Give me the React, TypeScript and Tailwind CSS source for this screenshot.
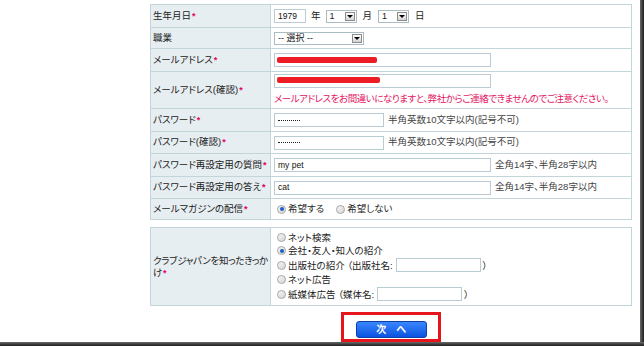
import React from "react";

const font =
  "font-['Liberation_Sans','Noto_Sans_CJK_JP',sans-serif] [font-feature-settings:'palt']";

const Req = () => (
  <span className="ml-[1px] text-[9px] font-bold text-[#e8005c]">*</span>
);

function Box({ w, children }: { w: string; children?: React.ReactNode }) {
  return (
    <div
      className={`${w} flex h-[14px] shrink-0 items-center border border-[#b9ccd3] bg-white px-[3px] text-[8.5px] leading-none text-[#111]`}
    >
      {children}
    </div>
  );
}

function Select({ w, label }: { w: string; label: string }) {
  return (
    <div
      className={`${w} flex h-[13px] shrink-0 items-center justify-between border border-[#a9bcc4] bg-white pl-[3px] pr-[1px] text-[9px] leading-none`}
    >
      <span>{label}</span>
      <span className="flex h-[9px] w-[10px] items-center justify-center border border-[#8c8c8c] bg-gradient-to-b from-white to-[#d4d4d4]">
        <span className="h-0 w-0 border-t-[3px] border-r-[3px] border-l-[3px] border-t-black border-r-transparent border-l-transparent" />
      </span>
    </div>
  );
}

function Radio({ on }: { on?: boolean }) {
  return (
    <span className="mr-[2px] flex h-[9px] w-[9px] shrink-0 items-center justify-center rounded-full border border-[#a9a9a9] bg-gradient-to-br from-[#f6f6f6] to-[#d6d6d6]">
      {on && <span className="h-[4px] w-[4px] rounded-full bg-[#1d5fc8]" />}
    </span>
  );
}

function Row({
  label,
  h,
  children,
}: {
  label: React.ReactNode;
  h: string;
  children: React.ReactNode;
}) {
  return (
    <tr className={h}>
      <td className="w-[120px] border border-[#c2d5db] bg-[#e7eef1] pl-[2px] align-middle whitespace-nowrap">
        {label}
      </td>
      <td className="border border-[#c2d5db] bg-white pl-[3px] align-middle">
        {children}
      </td>
    </tr>
  );
}

const Pw = () => (
  <span className="h-0 w-[22px] border-t border-dotted border-[#222]" />
);

export default function App() {
  return (
    <div className={`${font} flex h-[346px] w-[644px] flex-col text-[9.5px] text-[#222]`}>
      <div className="flex h-[342px]">
        <div className="w-[640px] bg-white pt-[4px] pl-[150px]">
          <table className="w-[482px] border-collapse">
            <tbody>
              <Row h="h-[23px]" label={<>生年月日<Req /></>}>
                <div className="flex items-center">
                  <Box w="w-[32px]">1979</Box>
                  <span className="mx-[5px]">年</span>
                  <Select w="w-[31px]" label="1" />
                  <span className="mx-[6px]">月</span>
                  <Select w="w-[31px]" label="1" />
                  <span className="ml-[6px]">日</span>
                </div>
              </Row>
              <Row h="h-[21px]" label="職業">
                <Select w="w-[90px]" label="-- 選択 --" />
              </Row>
              <Row h="h-[23px]" label={<>メールアドレス<Req /></>}>
                <div className="relative">
                  <Box w="w-[217px]" />
                  <span className="absolute top-[4px] left-[3px] h-[6px] w-[100px] rounded-[2px] bg-[#ee1c25]" />
                </div>
              </Row>
              <Row h="h-[37px]" label={<>メールアドレス(確認)<Req /></>}>
                <div className="relative pt-[1px]">
                  <Box w="w-[217px]" />
                  <span className="absolute top-[4px] left-[3px] h-[6px] w-[103px] rounded-[2px] bg-[#ee1c25]" />
                </div>
                <div className="mt-[4px] tracking-[-0.45px] text-[#e4145f]">
                  メールアドレスをお間違いになりますと、弊社からご連絡できませんのでご注意ください。
                </div>
              </Row>
              <Row h="h-[23px]" label={<>パスワード<Req /></>}>
                <div className="flex items-center">
                  <Box w="w-[110px]">
                    <Pw />
                  </Box>
                  <span className="ml-[4px] text-[#444]">半角英数10文字以内(記号不可)</span>
                </div>
              </Row>
              <Row h="h-[22px]" label={<>パスワード(確認)<Req /></>}>
                <div className="flex items-center">
                  <Box w="w-[110px]">
                    <Pw />
                  </Box>
                  <span className="ml-[4px] text-[#444]">半角英数10文字以内(記号不可)</span>
                </div>
              </Row>
              <Row h="h-[23px]" label={<>パスワード再設定用の質問<Req /></>}>
                <div className="flex items-center">
                  <Box w="w-[217px]">my pet</Box>
                  <span className="ml-[4px] text-[#444]">全角14字、半角28字以内</span>
                </div>
              </Row>
              <Row h="h-[22px]" label={<>パスワード再設定用の答え<Req /></>}>
                <div className="flex items-center">
                  <Box w="w-[217px]">cat</Box>
                  <span className="ml-[4px] text-[#444]">全角14字、半角28字以内</span>
                </div>
              </Row>
              <Row h="h-[21px]" label={<>メールマガジンの配信<Req /></>}>
                <div className="flex items-center pl-[3px]">
                  <Radio on />
                  <span>希望する</span>
                  <span className="ml-[12px] flex items-center">
                    <Radio />
                    <span>希望しない</span>
                  </span>
                </div>
              </Row>
            </tbody>
          </table>

          <table className="mt-[7px] w-[482px] border-collapse">
            <tbody>
              <Row
                h="h-[78px]"
                label={
                  <div className="leading-[12px] tracking-[-0.3px]">
                    クラブジャパンを知ったきっか
                    <br />け<Req />
                  </div>
                }
              >
                <div className="flex flex-col pl-[3px] leading-[13px]">
                  <div className="flex items-center">
                    <Radio />
                    ネット検索
                  </div>
                  <div className="flex items-center">
                    <Radio on />
                    会社・友人・知人の紹介
                  </div>
                  <div className="flex h-[16px] items-center">
                    <Radio />
                    出版社の紹介 （出版社名:
                    <span className="ml-[3px]">
                      <Box w="w-[85px]" />
                    </span>
                    <span className="ml-[2px]">）</span>
                  </div>
                  <div className="flex items-center">
                    <Radio />
                    ネット広告
                  </div>
                  <div className="flex h-[16px] items-center">
                    <Radio />
                    紙媒体広告 （媒体名:
                    <span className="ml-[3px]">
                      <Box w="w-[85px]" />
                    </span>
                    <span className="ml-[2px]">）</span>
                  </div>
                </div>
              </Row>
            </tbody>
          </table>

          <div className="flex w-[482px] justify-center pt-[6px]">
            <div className="flex h-[30px] w-[100px] justify-center border-[3px] border-[#e8141c] pt-[6px]">
              <button className="flex h-[17px] w-[71px] items-center justify-center gap-[10px] rounded-[3px] border border-[#0d3fa8] bg-gradient-to-b from-[#3a86ff] to-[#0a52e0] text-[10px] font-bold text-white">
                <span>次</span>
                <span>へ</span>
              </button>
            </div>
          </div>
        </div>
        <div className="w-[4px] bg-gradient-to-r from-[#6b6b6b] to-[#1e1e1e]" />
      </div>
      <div className="h-[4px] bg-gradient-to-b from-[#6b6b6b] to-[#1e1e1e]" />
    </div>
  );
}
